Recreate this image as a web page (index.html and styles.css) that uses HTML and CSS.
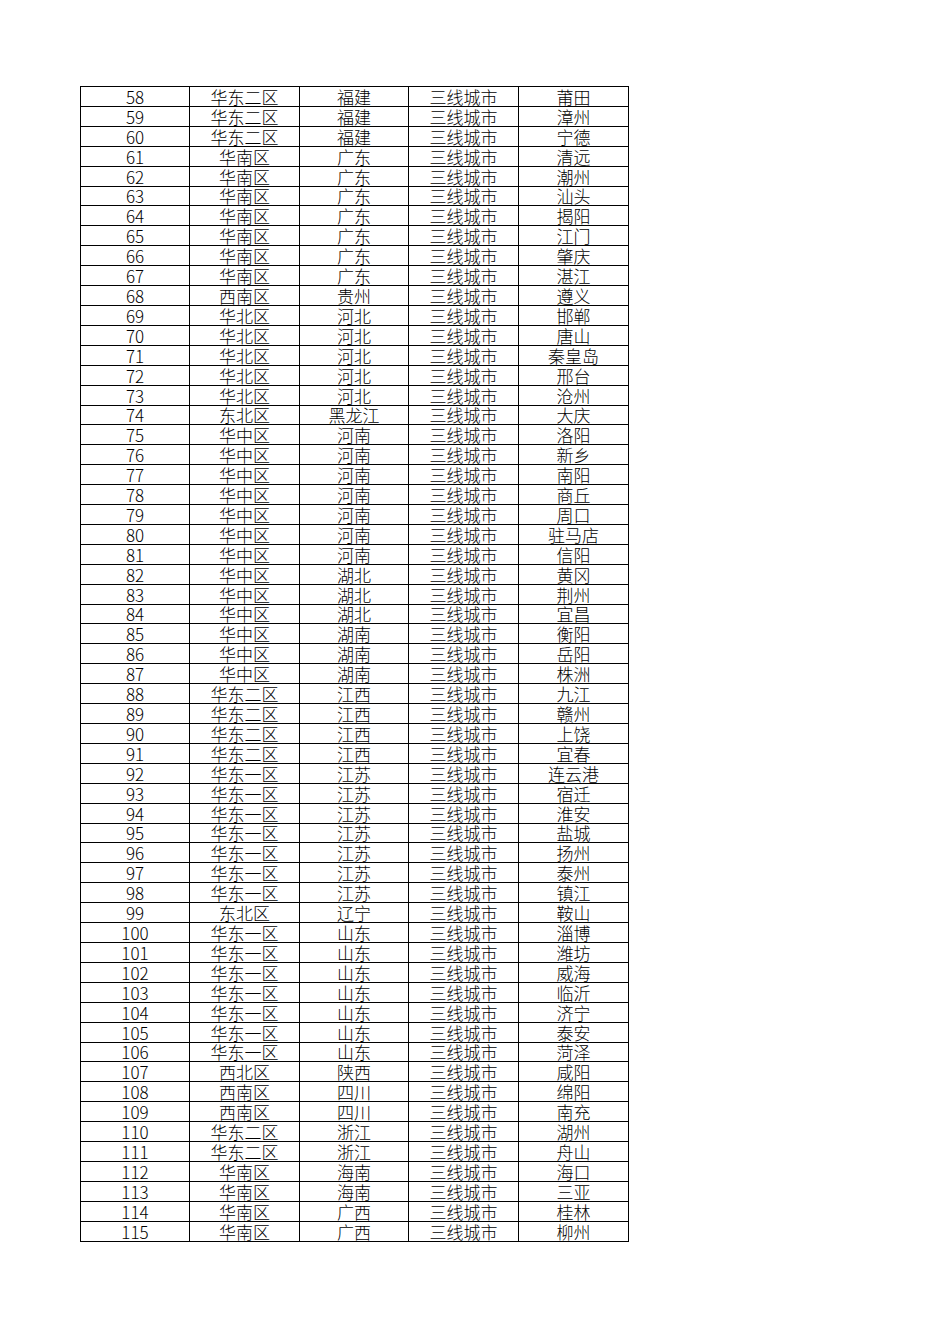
FILE: index.html
```html
<!DOCTYPE html>
<html lang="zh">
<head>
<meta charset="utf-8">
<link rel="stylesheet" href="styles.css">
</head>
<body>
<table class="sheet">
<colgroup><col class="c1"><col class="c2"><col class="c3"><col class="c4"><col class="c5"></colgroup>
<tbody>
<tr><td>58</td><td>华东二区</td><td>福建</td><td>三线城市</td><td>莆田</td></tr>
<tr><td>59</td><td>华东二区</td><td>福建</td><td>三线城市</td><td>漳州</td></tr>
<tr><td>60</td><td>华东二区</td><td>福建</td><td>三线城市</td><td>宁德</td></tr>
<tr><td>61</td><td>华南区</td><td>广东</td><td>三线城市</td><td>清远</td></tr>
<tr><td>62</td><td>华南区</td><td>广东</td><td>三线城市</td><td>潮州</td></tr>
<tr><td>63</td><td>华南区</td><td>广东</td><td>三线城市</td><td>汕头</td></tr>
<tr><td>64</td><td>华南区</td><td>广东</td><td>三线城市</td><td>揭阳</td></tr>
<tr><td>65</td><td>华南区</td><td>广东</td><td>三线城市</td><td>江门</td></tr>
<tr><td>66</td><td>华南区</td><td>广东</td><td>三线城市</td><td>肇庆</td></tr>
<tr><td>67</td><td>华南区</td><td>广东</td><td>三线城市</td><td>湛江</td></tr>
<tr><td>68</td><td>西南区</td><td>贵州</td><td>三线城市</td><td>遵义</td></tr>
<tr><td>69</td><td>华北区</td><td>河北</td><td>三线城市</td><td>邯郸</td></tr>
<tr><td>70</td><td>华北区</td><td>河北</td><td>三线城市</td><td>唐山</td></tr>
<tr><td>71</td><td>华北区</td><td>河北</td><td>三线城市</td><td>秦皇岛</td></tr>
<tr><td>72</td><td>华北区</td><td>河北</td><td>三线城市</td><td>邢台</td></tr>
<tr><td>73</td><td>华北区</td><td>河北</td><td>三线城市</td><td>沧州</td></tr>
<tr><td>74</td><td>东北区</td><td>黑龙江</td><td>三线城市</td><td>大庆</td></tr>
<tr><td>75</td><td>华中区</td><td>河南</td><td>三线城市</td><td>洛阳</td></tr>
<tr><td>76</td><td>华中区</td><td>河南</td><td>三线城市</td><td>新乡</td></tr>
<tr><td>77</td><td>华中区</td><td>河南</td><td>三线城市</td><td>南阳</td></tr>
<tr><td>78</td><td>华中区</td><td>河南</td><td>三线城市</td><td>商丘</td></tr>
<tr><td>79</td><td>华中区</td><td>河南</td><td>三线城市</td><td>周口</td></tr>
<tr><td>80</td><td>华中区</td><td>河南</td><td>三线城市</td><td>驻马店</td></tr>
<tr><td>81</td><td>华中区</td><td>河南</td><td>三线城市</td><td>信阳</td></tr>
<tr><td>82</td><td>华中区</td><td>湖北</td><td>三线城市</td><td>黄冈</td></tr>
<tr><td>83</td><td>华中区</td><td>湖北</td><td>三线城市</td><td>荆州</td></tr>
<tr><td>84</td><td>华中区</td><td>湖北</td><td>三线城市</td><td>宜昌</td></tr>
<tr><td>85</td><td>华中区</td><td>湖南</td><td>三线城市</td><td>衡阳</td></tr>
<tr><td>86</td><td>华中区</td><td>湖南</td><td>三线城市</td><td>岳阳</td></tr>
<tr><td>87</td><td>华中区</td><td>湖南</td><td>三线城市</td><td>株洲</td></tr>
<tr><td>88</td><td>华东二区</td><td>江西</td><td>三线城市</td><td>九江</td></tr>
<tr><td>89</td><td>华东二区</td><td>江西</td><td>三线城市</td><td>赣州</td></tr>
<tr><td>90</td><td>华东二区</td><td>江西</td><td>三线城市</td><td>上饶</td></tr>
<tr><td>91</td><td>华东二区</td><td>江西</td><td>三线城市</td><td>宜春</td></tr>
<tr><td>92</td><td>华东一区</td><td>江苏</td><td>三线城市</td><td>连云港</td></tr>
<tr><td>93</td><td>华东一区</td><td>江苏</td><td>三线城市</td><td>宿迁</td></tr>
<tr><td>94</td><td>华东一区</td><td>江苏</td><td>三线城市</td><td>淮安</td></tr>
<tr><td>95</td><td>华东一区</td><td>江苏</td><td>三线城市</td><td>盐城</td></tr>
<tr><td>96</td><td>华东一区</td><td>江苏</td><td>三线城市</td><td>扬州</td></tr>
<tr><td>97</td><td>华东一区</td><td>江苏</td><td>三线城市</td><td>泰州</td></tr>
<tr><td>98</td><td>华东一区</td><td>江苏</td><td>三线城市</td><td>镇江</td></tr>
<tr><td>99</td><td>东北区</td><td>辽宁</td><td>三线城市</td><td>鞍山</td></tr>
<tr><td>100</td><td>华东一区</td><td>山东</td><td>三线城市</td><td>淄博</td></tr>
<tr><td>101</td><td>华东一区</td><td>山东</td><td>三线城市</td><td>潍坊</td></tr>
<tr><td>102</td><td>华东一区</td><td>山东</td><td>三线城市</td><td>威海</td></tr>
<tr><td>103</td><td>华东一区</td><td>山东</td><td>三线城市</td><td>临沂</td></tr>
<tr><td>104</td><td>华东一区</td><td>山东</td><td>三线城市</td><td>济宁</td></tr>
<tr><td>105</td><td>华东一区</td><td>山东</td><td>三线城市</td><td>泰安</td></tr>
<tr><td>106</td><td>华东一区</td><td>山东</td><td>三线城市</td><td>菏泽</td></tr>
<tr><td>107</td><td>西北区</td><td>陕西</td><td>三线城市</td><td>咸阳</td></tr>
<tr><td>108</td><td>西南区</td><td>四川</td><td>三线城市</td><td>绵阳</td></tr>
<tr><td>109</td><td>西南区</td><td>四川</td><td>三线城市</td><td>南充</td></tr>
<tr><td>110</td><td>华东二区</td><td>浙江</td><td>三线城市</td><td>湖州</td></tr>
<tr><td>111</td><td>华东二区</td><td>浙江</td><td>三线城市</td><td>舟山</td></tr>
<tr><td>112</td><td>华南区</td><td>海南</td><td>三线城市</td><td>海口</td></tr>
<tr><td>113</td><td>华南区</td><td>海南</td><td>三线城市</td><td>三亚</td></tr>
<tr><td>114</td><td>华南区</td><td>广西</td><td>三线城市</td><td>桂林</td></tr>
<tr><td>115</td><td>华南区</td><td>广西</td><td>三线城市</td><td>柳州</td></tr>
</tbody>
</table>
</body>
</html>
```
FILE: styles.css
```css
html, body {
  margin: 0;
  padding: 0;
  background: #ffffff;
}
body {
  padding: 86px 0 0 80px;
  font-family: "Noto Sans CJK SC", "Noto Sans", sans-serif;
  font-weight: 300;
  color: #000;
}
.sheet {
  border-collapse: collapse;
  table-layout: fixed;
  width: 548px;
}
.c1 { width: 109px; }
.c2 { width: 110px; }
.c3 { width: 109px; }
.c4 { width: 110px; }
.c5 { width: 110px; }
.sheet td {
  border: 1px solid #000;
  padding: 0 0 1px 0;
  height: 17.91px;
  line-height: 17px;
  font-size: 17px;
  text-align: center;
  vertical-align: bottom;
  white-space: nowrap;
}
```
